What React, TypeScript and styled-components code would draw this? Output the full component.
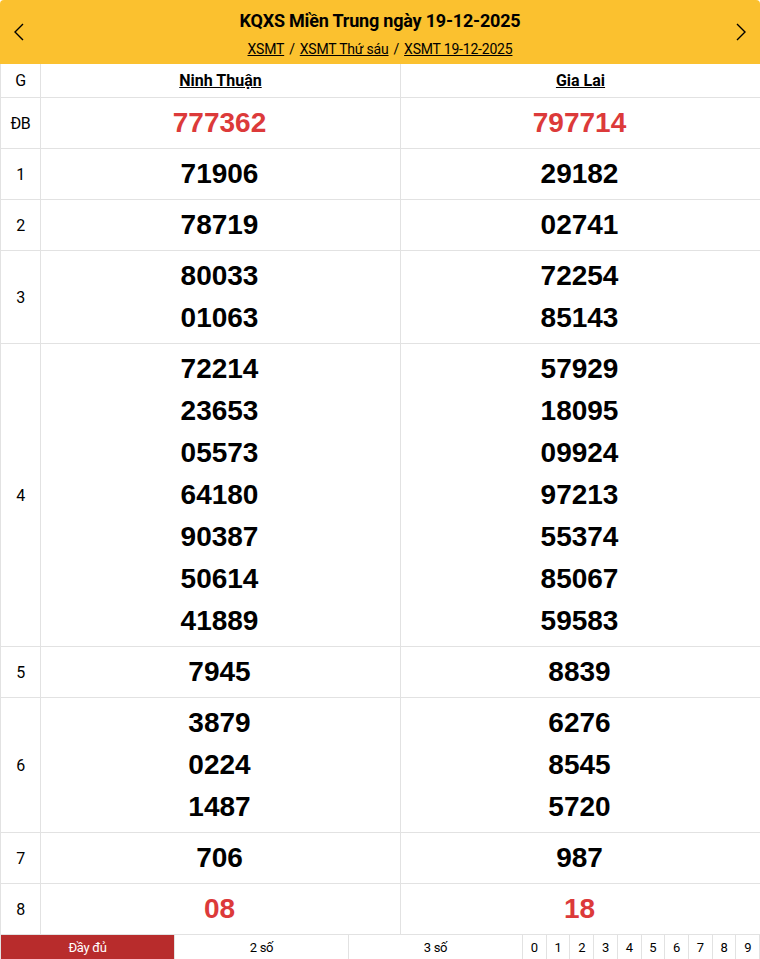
import React from 'react';
import styled, { createGlobalStyle } from 'styled-components';

const GlobalStyle = createGlobalStyle`
  html, body { margin: 0; padding: 0; background: #fff; }
  body { font-family: Roboto, "Liberation Sans", sans-serif; color: #000; }
  * { box-sizing: border-box; }
`;

interface Prize {
  label: string;
  left: string[];
  right: string[];
  red?: boolean;
}

const prizes: Prize[] = [
  { label: 'ĐB', left: ['777362'], right: ['797714'], red: true },
  { label: '1', left: ['71906'], right: ['29182'] },
  { label: '2', left: ['78719'], right: ['02741'] },
  { label: '3', left: ['80033', '01063'], right: ['72254', '85143'] },
  {
    label: '4',
    left: ['72214', '23653', '05573', '64180', '90387', '50614', '41889'],
    right: ['57929', '18095', '09924', '97213', '55374', '85067', '59583'],
  },
  { label: '5', left: ['7945'], right: ['8839'] },
  { label: '6', left: ['3879', '0224', '1487'], right: ['6276', '8545', '5720'] },
  { label: '7', left: ['706'], right: ['987'] },
  { label: '8', left: ['08'], right: ['18'], red: true },
];

const Page = styled.div`
  width: 760px;
`;

const Header = styled.div`
  height: 64px;
  background: #fbc12f;
  border-radius: 4px 4px 0 0;
  display: flex;
  align-items: center;
  justify-content: space-between;
  padding: 0 8px;
`;

const Arrow = styled.button`
  width: 22px;
  height: 30px;
  border: 0;
  background: none;
  padding: 0;
  display: flex;
  align-items: center;
  justify-content: center;
  cursor: pointer;
`;

const TitleBox = styled.div`
  display: flex;
  flex-direction: column;
  align-items: center;
  padding-top: 4px;
`;

const Title = styled.h1`
  margin: 0;
  font-size: 18px;
  font-weight: 700;
  line-height: 24px;
  letter-spacing: -0.2px;
`;

const Crumbs = styled.div`
  margin-top: 6px;
  font-size: 14px;
  line-height: 20px;
  letter-spacing: -0.2px;
  a { color: #000; text-decoration: underline; }
  span { margin: 0 5px; }
`;

const Table = styled.div`
  display: grid;
  grid-template-columns: 40px 360px 360px;
  border-left: 1px solid #e2e2e2;
`;

const Cell = styled.div<{ $head?: boolean }>`
  border-right: 1px solid #e2e2e2;
  border-bottom: 1px solid #e2e2e2;
  display: flex;
  flex-direction: column;
  align-items: center;
  justify-content: center;
  padding: ${p => (p.$head ? '0' : '4px 0')};
  min-height: ${p => (p.$head ? '34px' : '51px')};
`;

const Label = styled.span`
  font-size: 16px;
  letter-spacing: -0.3px;
`;

const Province = styled.a`
  font-size: 16px;
  font-weight: 700;
  color: #000;
  text-decoration: underline;
`;

const Num = styled.div<{ $red?: boolean }>`
  font-family: "Liberation Sans", Arial, sans-serif;
  font-weight: 700;
  font-size: 28px;
  line-height: 42px;
  margin-right: 2px;
  color: ${p => (p.$red ? '#dc3a3a' : '#000')};
`;

const Footer = styled.div`
  height: 25px;
  display: grid;
  grid-template-columns: 174px 174px 174px repeat(10, 1fr);
  border-left: 1px solid #e2e2e2;
`;

const Tab = styled.div<{ $active?: boolean }>`
  display: flex;
  align-items: center;
  justify-content: center;
  font-size: 13px;
  letter-spacing: -0.3px;
  background: ${p => (p.$active ? '#b82c2c' : '#fff')};
  color: ${p => (p.$active ? '#fff' : '#000')};
  border-right: 1px solid #e2e2e2;
`;

const Chevron = ({ dir }: { dir: 'left' | 'right' }) => (
  <svg width="14" height="20" viewBox="0 0 14 20" fill="none">
    <path
      d={dir === 'left' ? 'M11 2 L3 10 L11 18' : 'M3 2 L11 10 L3 18'}
      stroke="#000"
      strokeWidth="1.4"
    />
  </svg>
);

export default function App() {
  return (
    <Page>
      <GlobalStyle />
      <Header>
        <Arrow><Chevron dir="left" /></Arrow>
        <TitleBox>
          <Title>KQXS Miền Trung ngày 19-12-2025</Title>
          <Crumbs>
            <a href="#">XSMT</a><span>/</span>
            <a href="#">XSMT Thứ sáu</a><span>/</span>
            <a href="#">XSMT 19-12-2025</a>
          </Crumbs>
        </TitleBox>
        <Arrow><Chevron dir="right" /></Arrow>
      </Header>
      <Table>
        <Cell $head><Label>G</Label></Cell>
        <Cell $head><Province href="#">Ninh Thuận</Province></Cell>
        <Cell $head><Province href="#">Gia Lai</Province></Cell>
        {prizes.map(p => (
          <React.Fragment key={p.label}>
            <Cell><Label>{p.label}</Label></Cell>
            <Cell>{p.left.map((n, i) => <Num key={i} $red={p.red}>{n}</Num>)}</Cell>
            <Cell>{p.right.map((n, i) => <Num key={i} $red={p.red}>{n}</Num>)}</Cell>
          </React.Fragment>
        ))}
      </Table>
      <Footer>
        <Tab $active>Đầy đủ</Tab>
        <Tab>2 số</Tab>
        <Tab>3 số</Tab>
        {[0, 1, 2, 3, 4, 5, 6, 7, 8, 9].map(d => <Tab key={d}>{d}</Tab>)}
      </Footer>
    </Page>
  );
}
